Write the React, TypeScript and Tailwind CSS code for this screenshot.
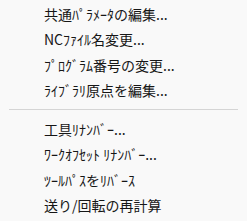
import React from 'react';

const groups: string[][] = [
  ['共通ﾊﾟﾗﾒｰﾀの編集...', 'NCﾌｧｲﾙ名変更...', 'ﾌﾟﾛｸﾞﾗﾑ番号の変更...', 'ﾗｲﾌﾞﾗﾘ原点を編集...'],
  ['工具ﾘﾅﾝﾊﾞｰ...', 'ﾜｰｸｵﾌｾｯﾄ ﾘﾅﾝﾊﾞｰ...', 'ﾂｰﾙﾊﾟｽをﾘﾊﾞｰｽ', '送り/回転の再計算'],
];

function MenuItem({ label }: { label: string }) {
  return (
    <div className="flex h-[25.5px] items-center pl-[44px] text-[14px] leading-none text-[#161616]">
      <span className="whitespace-nowrap">{label}</span>
    </div>
  );
}

export default function App() {
  return (
    <div
      className="flex h-[221px] w-[247px] flex-col bg-[#f9f9f9] pt-px"
      style={{ fontFamily: '"Noto Sans CJK JP", "Noto Sans", sans-serif' }}
    >
      {groups[0].map((l) => (
        <MenuItem key={l} label={l} />
      ))}
      <div className="flex h-[13px] items-center px-[9px]">
        <div className="h-px w-full bg-[#d5d5d5]" />
      </div>
      {groups[1].map((l) => (
        <MenuItem key={l} label={l} />
      ))}
    </div>
  );
}
